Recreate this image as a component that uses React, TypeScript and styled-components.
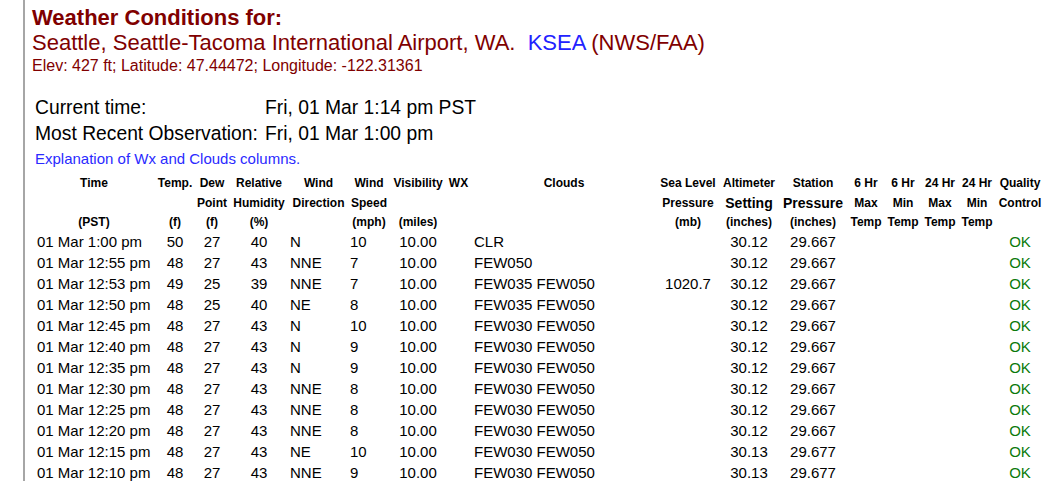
import React from "react";
import styled, { createGlobalStyle } from "styled-components";

const GlobalStyle = createGlobalStyle`
  html, body {
    margin: 0;
    padding: 0;
    background: #ffffff;
  }
  body {
    font-family: "Liberation Sans", Arial, sans-serif;
    color: #000000;
  }
`;

const Page = styled.div`
  padding-left: 23px;
  min-height: 100vh;
  box-sizing: border-box;
`;

const Main = styled.main`
  border-left: 2px solid #a6a6a6;
  padding: 5px 0 0 7px;
  min-height: 100vh;
  box-sizing: border-box;
`;

const Title = styled.h1`
  margin: 0;
  font-size: 22px;
  line-height: 25px;
  font-weight: bold;
  color: #800000;
`;

const Location = styled.div`
  font-size: 22px;
  line-height: 25px;
  color: #800000;
  white-space: nowrap;
`;

const StationLink = styled.a`
  color: #2222ff;
  text-decoration: none;
`;

const Elev = styled.div`
  margin-top: 3px;
  font-size: 16px;
  line-height: 16px;
  color: #800000;
`;

const TimeGrid = styled.div`
  display: grid;
  grid-template-columns: 230px auto;
  grid-auto-rows: 26px;
  align-items: center;
  margin: 21px 0 0 3px;
  font-size: 19.3px;
  white-space: nowrap;
`;

const Explain = styled.a`
  display: block;
  margin: 3px 0 0 3px;
  font-size: 15px;
  line-height: 17px;
  color: #2a2aff;
  text-decoration: none;
`;

const ObsTable = styled.table`
  margin-top: 5px;
  margin-left: 1px;
  table-layout: fixed;
  border-collapse: collapse;
  width: 1012px;
`;

const Col = styled.col<{ $w: number }>`
  width: ${(p) => p.$w}px;
`;

const HeadRow = styled.tr<{ $h: number }>`
  height: ${(p) => p.$h}px;
`;

const HeadCell = styled.th<{ $big?: boolean }>`
  padding: 0;
  font-size: ${(p) => (p.$big ? 14 : 12)}px;
  line-height: 1;
  font-weight: bold;
  text-align: center;
  vertical-align: middle;
  white-space: nowrap;
`;

const DataRow = styled.tr`
  height: 21px;
`;

const DataCell = styled.td<{ $align: "left" | "center"; $pad?: number; $ok?: boolean }>`
  padding: 0 0 0 ${(p) => p.$pad ?? 0}px;
  font-size: 15px;
  line-height: 21px;
  text-align: ${(p) => p.$align};
  white-space: nowrap;
  overflow: visible;
  color: ${(p) => (p.$ok ? "#0a7a0a" : "#000000")};
`;

const widths = [122, 40, 34, 60, 59, 42, 56, 25, 186, 62, 60, 68, 38, 36, 38, 36, 50];

type Cell = { text: string; big?: boolean };
const headRows: { h: number; cells: Cell[] }[] = [
  {
    h: 21,
    cells: [
      "Time", "Temp.", "Dew", "Relative", "Wind", "Wind", "Visibility", "WX", "Clouds",
      "Sea Level", "Altimeter", "Station", "6 Hr", "6 Hr", "24 Hr", "24 Hr", "Quality",
    ].map((t) => ({ text: t })),
  },
  {
    h: 20,
    cells: [
      { text: "" }, { text: "" }, { text: "Point" }, { text: "Humidity" }, { text: "Direction" },
      { text: "Speed" }, { text: "" }, { text: "" }, { text: "" }, { text: "Pressure" },
      { text: "Setting", big: true }, { text: "Pressure", big: true }, { text: "Max" },
      { text: "Min" }, { text: "Max" }, { text: "Min" }, { text: "Control" },
    ],
  },
  {
    h: 18,
    cells: [
      "(PST)", "(f)", "(f)", "(%)", "", "(mph)", "(miles)", "", "", "(mb)", "(inches)",
      "(inches)", "Temp", "Temp", "Temp", "Temp", "",
    ].map((t) => ({ text: t })),
  },
];

type Align = { align: "left" | "center"; pad?: number };
const colAlign: Align[] = [
  { align: "left", pad: 4 },
  { align: "center" },
  { align: "center" },
  { align: "center" },
  { align: "left", pad: 1 },
  { align: "left", pad: 2 },
  { align: "center" },
  { align: "left", pad: 2 },
  { align: "left", pad: 3 },
  { align: "center" },
  { align: "center" },
  { align: "center" },
  { align: "center" },
  { align: "center" },
  { align: "center" },
  { align: "center" },
  { align: "center" },
];

type Obs = [string, string, string, string, string, string, string, string, string, string, string];
const obs: Obs[] = [
  ["01 Mar 1:00 pm", "50", "27", "40", "N", "10", "CLR", "", "30.12", "29.667", "OK"],
  ["01 Mar 12:55 pm", "48", "27", "43", "NNE", "7", "FEW050", "", "30.12", "29.667", "OK"],
  ["01 Mar 12:53 pm", "49", "25", "39", "NNE", "7", "FEW035 FEW050", "1020.7", "30.12", "29.667", "OK"],
  ["01 Mar 12:50 pm", "48", "25", "40", "NE", "8", "FEW035 FEW050", "", "30.12", "29.667", "OK"],
  ["01 Mar 12:45 pm", "48", "27", "43", "N", "10", "FEW030 FEW050", "", "30.12", "29.667", "OK"],
  ["01 Mar 12:40 pm", "48", "27", "43", "N", "9", "FEW030 FEW050", "", "30.12", "29.667", "OK"],
  ["01 Mar 12:35 pm", "48", "27", "43", "N", "9", "FEW030 FEW050", "", "30.12", "29.667", "OK"],
  ["01 Mar 12:30 pm", "48", "27", "43", "NNE", "8", "FEW030 FEW050", "", "30.12", "29.667", "OK"],
  ["01 Mar 12:25 pm", "48", "27", "43", "NNE", "8", "FEW030 FEW050", "", "30.12", "29.667", "OK"],
  ["01 Mar 12:20 pm", "48", "27", "43", "NNE", "8", "FEW030 FEW050", "", "30.12", "29.667", "OK"],
  ["01 Mar 12:15 pm", "48", "27", "43", "NE", "10", "FEW030 FEW050", "", "30.13", "29.677", "OK"],
  ["01 Mar 12:10 pm", "48", "27", "43", "NNE", "9", "FEW030 FEW050", "", "30.13", "29.677", "OK"],
];

function rowCells(o: Obs): string[] {
  const [time, temp, dew, rh, dir, spd, clouds, slp, alt, stn, qc] = o;
  return [time, temp, dew, rh, dir, spd, "10.00", "", clouds, slp, alt, stn, "", "", "", "", qc];
}

export default function App() {
  return (
    <>
      <GlobalStyle />
      <Page>
        <Main>
          <Title>Weather Conditions for:</Title>
          <Location>
            Seattle, Seattle-Tacoma International Airport, WA.{"\u00a0 "}
            <StationLink href="#">KSEA</StationLink> (NWS/FAA)
          </Location>
          <Elev>Elev: 427 ft; Latitude: 47.44472; Longitude: -122.31361</Elev>
          <TimeGrid>
            <span>Current time:</span>
            <span>Fri, 01 Mar 1:14 pm PST</span>
            <span>Most Recent Observation:</span>
            <span>Fri, 01 Mar 1:00 pm</span>
          </TimeGrid>
          <Explain href="#">Explanation of Wx and Clouds columns.</Explain>
          <ObsTable>
            <colgroup>
              {widths.map((w, i) => (
                <Col key={i} $w={w} />
              ))}
            </colgroup>
            <thead>
              {headRows.map((r, ri) => (
                <HeadRow key={ri} $h={r.h}>
                  {r.cells.map((c, ci) => (
                    <HeadCell key={ci} $big={c.big}>
                      {c.text}
                    </HeadCell>
                  ))}
                </HeadRow>
              ))}
            </thead>
            <tbody>
              {obs.map((o, ri) => (
                <DataRow key={ri}>
                  {rowCells(o).map((t, ci) => (
                    <DataCell
                      key={ci}
                      $align={colAlign[ci].align}
                      $pad={colAlign[ci].pad}
                      $ok={ci === 16}
                    >
                      {t}
                    </DataCell>
                  ))}
                </DataRow>
              ))}
            </tbody>
          </ObsTable>
        </Main>
      </Page>
    </>
  );
}
